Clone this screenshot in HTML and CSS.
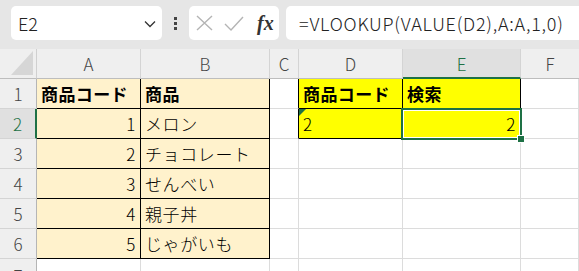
FILE: index.html
```html
<!DOCTYPE html>
<html lang="ja">
<head>
<meta charset="utf-8">
<link rel="stylesheet" href="styles.css">
</head>
<body>
<div class="app">
  <div class="toolbar">
    <div class="namebox">
      <span class="name">E2</span>
      <svg class="chev" width="12" height="8" viewBox="0 0 12 8"><path d="M1 1.5 L6 6.5 L11 1.5" fill="none" stroke="#333" stroke-width="1.3"/></svg>
    </div>
    <div class="dots"><i></i><i></i><i></i></div>
    <div class="fxbox">
      <svg width="17" height="16" viewBox="0 0 17 16"><path d="M1 1 L16 15 M16 1 L1 15" stroke="#b4b4b4" stroke-width="1.4" fill="none"/></svg>
      <svg width="20" height="15" viewBox="0 0 20 15"><path d="M1 8 L7 14 L19 1" stroke="#b4b4b4" stroke-width="1.4" fill="none"/></svg>
      <span class="fx">fx</span>
    </div>
    <div class="formula">=VLOOKUP(VALUE(D2),A:A,1,0)</div>
  </div>
  <div class="sheet">
    <div class="hd corner"><svg width="22" height="24" viewBox="0 0 22 24"><path d="M0 24 L22 0 L22 24 Z" fill="#d6d6d6"/></svg></div>
    <div class="hd col">A</div>
    <div class="hd col">B</div>
    <div class="hd col">C</div>
    <div class="hd col">D</div>
    <div class="hd col sel-col">E</div>
    <div class="hd col last">F</div>

    <div class="hd row">1</div>
    <div class="c org bk bold">商品コード</div>
    <div class="c org bk bold">商品</div>
    <div class="c bkr"></div>
    <div class="c yel bk bold">商品コード</div>
    <div class="c yel bk bold">検索</div>
    <div class="c"></div>

    <div class="hd row sel-row">2</div>
    <div class="c org bk num">1</div>
    <div class="c org bk">メロン</div>
    <div class="c bkr"></div>
    <div class="c yel bk err">2</div>
    <div class="c yel bk num">2</div>
    <div class="c"></div>

    <div class="hd row">3</div>
    <div class="c org bk num">2</div>
    <div class="c org bk">チョコレート</div>
    <div class="c"></div>
    <div class="c"></div>
    <div class="c"></div>
    <div class="c"></div>

    <div class="hd row">4</div>
    <div class="c org bk num">3</div>
    <div class="c org bk">せんべい</div>
    <div class="c"></div>
    <div class="c"></div>
    <div class="c"></div>
    <div class="c"></div>

    <div class="hd row">5</div>
    <div class="c org bk num">4</div>
    <div class="c org bk">親子丼</div>
    <div class="c"></div>
    <div class="c"></div>
    <div class="c"></div>
    <div class="c"></div>

    <div class="hd row">6</div>
    <div class="c org bk num">5</div>
    <div class="c org bk">じゃがいも</div>
    <div class="c"></div>
    <div class="c"></div>
    <div class="c"></div>
    <div class="c"></div>

    <div class="hd row r7">7</div>
    <div class="c"></div>
    <div class="c"></div>
    <div class="c"></div>
    <div class="c"></div>
    <div class="c"></div>
    <div class="c"></div>

    <div class="selection"><span class="handle"></span></div>
  </div>
</div>
</body>
</html>
```

FILE: styles.css
```css
html, body {
  margin: 0;
  padding: 0;
  background: #ffffff;
}
.app {
  width: 579px;
  height: 271px;
  overflow: hidden;
  font-family: "Noto Sans CJK JP", "Noto Sans", sans-serif;
  color: #000;
}
.toolbar {
  height: 49px;
  box-sizing: border-box;
  background: #e6e6e6;
  display: flex;
  align-items: flex-start;
  padding: 6px 0 0 11px;
}
.namebox {
  width: 151px;
  height: 34px;
  background: #fff;
  border-radius: 5px;
  display: flex;
  align-items: center;
  justify-content: space-between;
  padding: 0 6px 0 7px;
  box-sizing: border-box;
}
.name {
  font-size: 18px;
  font-weight: 300;
  color: #222;
  line-height: 1;
}
.chev { margin-top: 1px; }
.dots {
  width: 27px;
  height: 34px;
  display: flex;
  flex-direction: column;
  align-items: center;
  justify-content: center;
  gap: 2px;
}
.dots i {
  display: block;
  width: 3px;
  height: 3px;
  background: #444;
}
.fxbox {
  width: 90px;
  height: 34px;
  background: #fff;
  border-radius: 5px;
  display: flex;
  align-items: center;
  gap: 11px;
  padding-left: 7px;
  box-sizing: border-box;
}
.fx {
  font-family: "Liberation Serif", "DejaVu Serif", serif;
  font-style: italic;
  font-weight: bold;
  font-size: 20px;
  color: #333;
  margin-left: 2px;
}
.formula {
  margin-left: 7px;
  flex: 1;
  height: 34px;
  background: #fff;
  border-radius: 5px 0 0 5px;
  font-size: 18px;
  font-weight: 300;
  letter-spacing: 0.75px;
  line-height: 34px;
  padding-left: 13px;
  color: #222;
  white-space: nowrap;
}
.sheet {
  position: relative;
  display: grid;
  grid-template-columns: 37px 104px 129px 29px 104px 118px 1fr;
  grid-template-rows: repeat(7, 30px) 30px;
}
.hd {
  background: #efefef;
  color: #444;
  font-size: 17px;
  font-weight: 300;
  display: flex;
  align-items: center;
  justify-content: center;
  box-sizing: border-box;
}
.corner {
  border-right: 1px solid #d0d0d0;
  border-bottom: 1px solid #bdbdbd;
  align-items: flex-end;
  justify-content: flex-end;
  padding: 0 3px 3px 0;
}
.col {
  border-right: 1px solid #d4d4d4;
  border-bottom: 1px solid #bdbdbd;
}
.col.last { border-right: none; }
.row {
  border-right: 1px solid #b5b5b5;
  border-bottom: 1px solid #d4d4d4;
}
.sel-col {
  background: #e0e0e0;
  color: #1e7145;
  border-bottom: 2px solid #1e7145;
}
.sel-row {
  background: #e0e0e0;
  color: #1e7145;
  border-right: 2px solid #1e7145;
}
.r7 { align-items: flex-start; padding-top: 4px; }
.c {
  box-sizing: border-box;
  border-right: 1px solid #dcdcdc;
  border-bottom: 1px solid #dcdcdc;
  font-size: 17px;
  font-weight: 300;
  letter-spacing: 0.6px;
  display: flex;
  align-items: center;
  padding: 0 3px 0 4px;
  white-space: nowrap;
  position: relative;
}
.org { background: #fff2cc; }
.yel { background: #ffff00; }
.bk { border-color: #000; }
.bkr { border-right-color: #000; }
.c.bold { font-weight: bold; letter-spacing: 0.4px; }
.num { justify-content: flex-end; padding-right: 4px; }
.err::before {
  content: "";
  position: absolute;
  left: 0;
  top: 0;
  border-top: 7px solid #1e7145;
  border-right: 7px solid transparent;
}
.selection {
  position: absolute;
  left: 401px;
  top: 59px;
  width: 121px;
  height: 32px;
  box-sizing: border-box;
  border: 2px solid #1e7145;
  box-shadow: inset 0 0 0 1px #fff;
  pointer-events: none;
}
.handle {
  position: absolute;
  right: -5px;
  bottom: -5px;
  width: 6px;
  height: 6px;
  background: #1e7145;
  border: 1px solid #fff;
}
```
